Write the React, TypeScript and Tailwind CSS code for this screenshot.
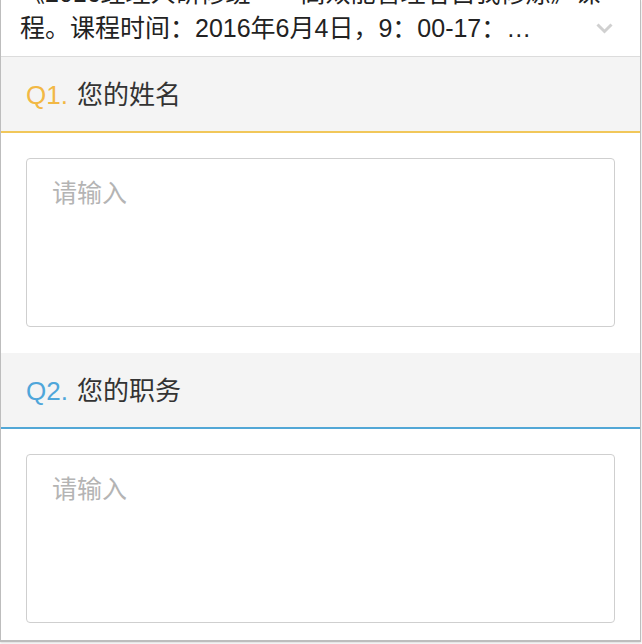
const font = { fontFamily: '"Liberation Sans", "Noto Sans CJK SC", sans-serif' }

const questions = [
  { no: 'Q1.', title: '您的姓名', accent: 'text-[#f2b844]', line: 'border-[#f1c75a]' },
  { no: 'Q2.', title: '您的职务', accent: 'text-[#4fa6da]', line: 'border-[#52a7d6]' },
]

function Question({ q }: { q: (typeof questions)[number] }) {
  return (
    <div>
      <div className={`h-[76px] bg-[#f4f4f4] border-b-2 ${q.line} flex items-center px-[25px] pt-[3px]`}>
        <span className={`text-[26px] ${q.accent}`}>{q.no}</span>
        <span className="text-[26px] text-[#333] ml-[9px]">{q.title}</span>
      </div>
      <div className="px-[25px] pt-[25px] pb-[26px]">
        <div className="h-[169px] border border-[#cfcfcf] rounded-[4px] bg-white pl-[25px] pt-[16px]">
          <span className="text-[25px] text-[#b4b4b4]">请输入</span>
        </div>
      </div>
    </div>
  )
}

export default function App() {
  return (
    <div className="w-[642px] h-[644px] bg-white overflow-hidden" style={font}>
      <div className="w-[641px] h-[642px] border-l border-r border-b-2 border-[#bdbdbd] shadow-[0_1px_2px_rgba(0,0,0,0.15)] overflow-hidden">
        <div className="h-[57px] border-b border-[#dcdcdc] overflow-hidden relative">
          <div className="pl-[19px] -mt-[24px] text-[25px] leading-[35px] text-[#222] whitespace-nowrap">
            <div>《2016经理人研修班——高效能管理者自我修炼》课</div>
            <div>程。课程时间：2016年6月4日，9：00-17：…</div>
          </div>
          <svg className="absolute right-[27px] top-[23px]" width="17" height="11" viewBox="0 0 17 11">
            <path d="M1.5 1.5 L8.5 8.5 L15.5 1.5" fill="none" stroke="#d0d0d0" strokeWidth="3" />
          </svg>
        </div>
        {questions.map((q) => (
          <Question key={q.no} q={q} />
        ))}
      </div>
    </div>
  )
}
